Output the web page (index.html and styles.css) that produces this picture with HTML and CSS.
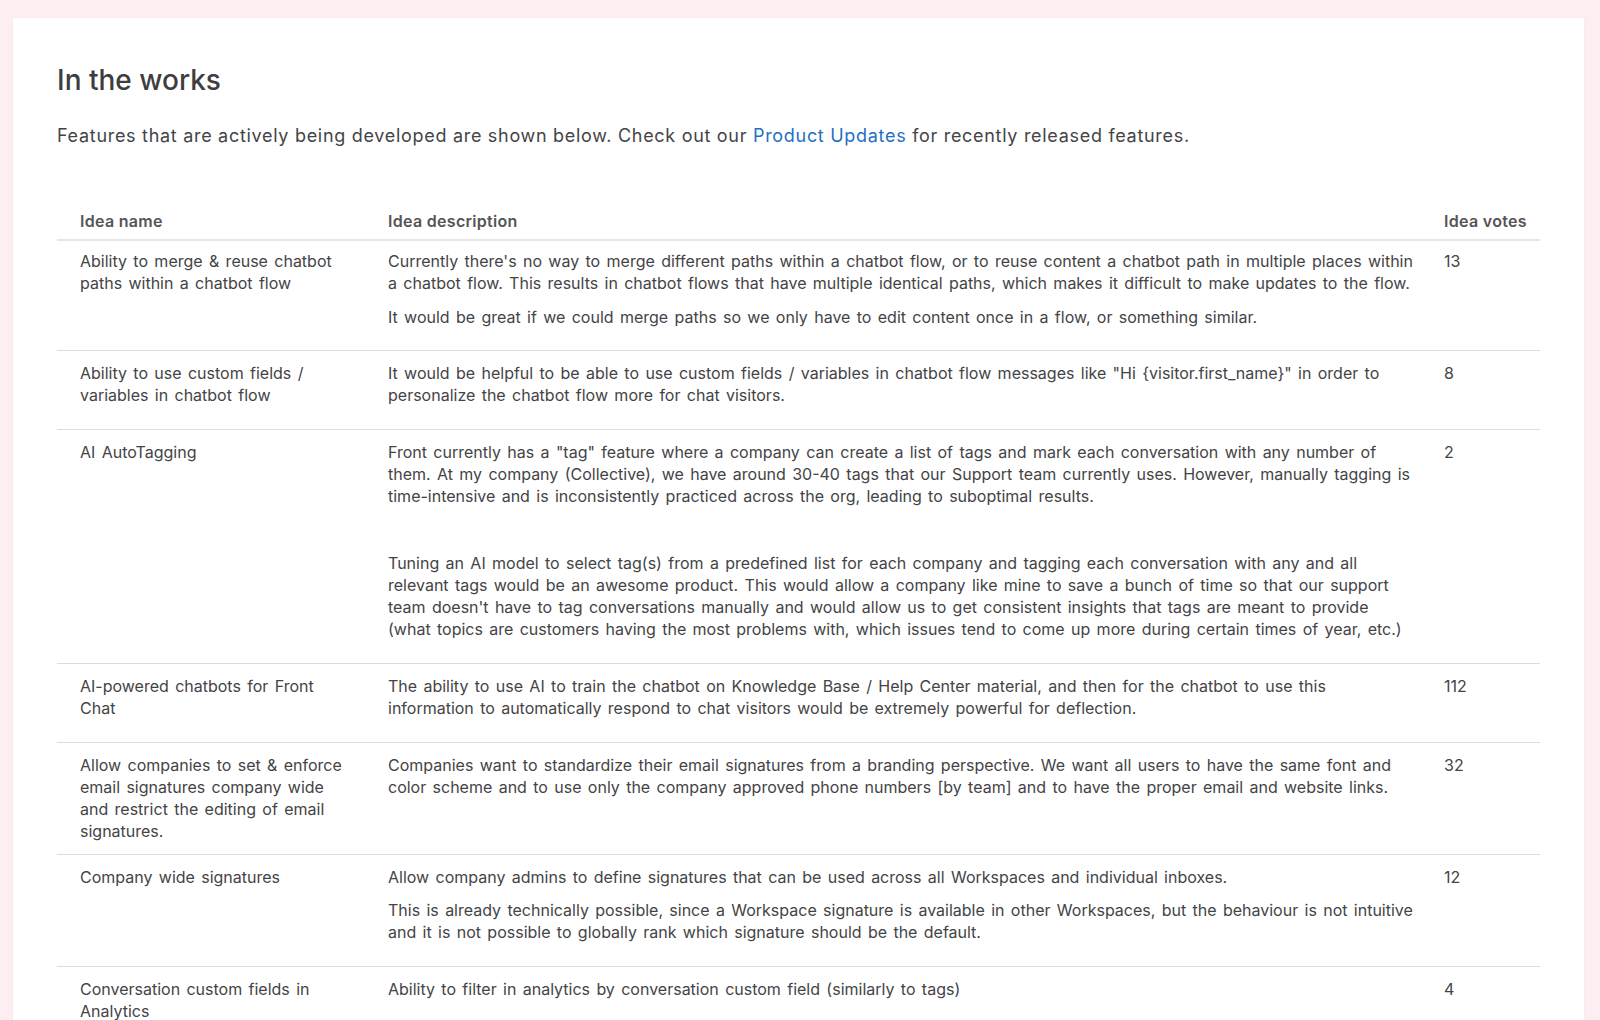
FILE: index.html
```html
<!DOCTYPE html>
<html lang="en">
<head>
<meta charset="utf-8">
<title>In the works</title>
<link rel="stylesheet" href="styles.css">
</head>
<body>
<main class="card">
  <h1 class="title">In the works</h1>
  <p class="intro">Features that are actively being developed are shown below. Check out our <a class="link" href="#">Product Updates</a> for recently released features.</p>
  <table class="ideas">
    <colgroup>
      <col class="col-name">
      <col class="col-desc">
      <col class="col-votes">
    </colgroup>
    <thead>
      <tr>
        <th>Idea name</th>
        <th>Idea description</th>
        <th>Idea votes</th>
      </tr>
    </thead>
    <tbody>
      <tr>
        <td class="name">Ability to merge &amp; reuse chatbot paths within a chatbot flow</td>
        <td class="desc">
          <p>Currently there's no way to merge different paths within a chatbot flow, or to reuse content a chatbot path in multiple places within a chatbot flow. This results in chatbot flows that have multiple identical paths, which makes it difficult to make updates to the flow.</p>
          <p>It would be great if we could merge paths so we only have to edit content once in a flow, or something similar.</p>
        </td>
        <td>13</td>
      </tr>
      <tr>
        <td class="name">Ability to use custom fields / variables in chatbot flow</td>
        <td class="desc">
          <p>It would be helpful to be able to use custom fields / variables in chatbot flow messages like "Hi {visitor.first_name}" in order to personalize the chatbot flow more for chat visitors.</p>
        </td>
        <td>8</td>
      </tr>
      <tr>
        <td class="name">AI AutoTagging</td>
        <td class="desc">
          <p>Front currently has a "tag" feature where a company can create a list of tags and mark each conversation with any number of them. At my company (Collective), we have around 30-40 tags that our Support team currently uses. However, manually tagging is time-intensive and is inconsistently practiced across the org, leading to suboptimal results.</p>
          <p><br></p>
          <p>Tuning an AI model to select tag(s) from a predefined list for each company and tagging each conversation with any and all relevant tags would be an awesome product. This would allow a company like mine to save a bunch of time so that our support team doesn't have to tag conversations manually and would allow us to get consistent insights that tags are meant to provide (what topics are customers having the most problems with, which issues tend to come up more during certain times of year, etc.)</p>
        </td>
        <td>2</td>
      </tr>
      <tr>
        <td class="name">AI-powered chatbots for Front Chat</td>
        <td class="desc">
          <p>The ability to use AI to train the chatbot on Knowledge Base / Help Center material, and then for the chatbot to use this information to automatically respond to chat visitors would be extremely powerful for deflection.</p>
        </td>
        <td>112</td>
      </tr>
      <tr>
        <td class="name">Allow companies to set &amp; enforce email signatures company wide and restrict the editing of email signatures.</td>
        <td class="desc">
          <p>Companies want to standardize their email signatures from a branding perspective. We want all users to have the same font and color scheme and to use only the company approved phone numbers [by team] and to have the proper email and website links.</p>
        </td>
        <td>32</td>
      </tr>
      <tr>
        <td class="name">Company wide signatures</td>
        <td class="desc">
          <p>Allow company admins to define signatures that can be used across all Workspaces and individual inboxes.</p>
          <p>This is already technically possible, since a Workspace signature is available in other Workspaces, but the behaviour is not intuitive and it is not possible to globally rank which signature should be the default.</p>
        </td>
        <td>12</td>
      </tr>
      <tr>
        <td class="name">Conversation custom fields in Analytics</td>
        <td class="desc">
          <p>Ability to filter in analytics by conversation custom field (similarly to tags)</p>
        </td>
        <td>4</td>
      </tr>
    </tbody>
  </table>
</main>
</body>
</html>
```
FILE: styles.css
```css
html, body {
  margin: 0;
  padding: 0;
}

body {
  background: #fdeef2;
  font-family: Inter, "Noto Sans", "Liberation Sans", sans-serif;
  color: #444446;
  min-height: 1020px;
}

.card {
  background: #ffffff;
  margin: 18px 16px 0 13px;
  padding: 45px 44px 40px 44px;
  min-height: 1100px;
  box-shadow: 0 0 3px rgba(0, 0, 0, 0.04);
}

.title {
  margin: 0;
  font-size: 28px;
  line-height: 34px;
  font-weight: 500;
  color: #3e3e40;
}

.intro {
  margin: 25px 0 0 0;
  font-size: 18px;
  line-height: 27px;
  letter-spacing: 0.7px;
  color: #444446;
}

.link {
  color: #1f6fc5;
  text-decoration: none;
}

.ideas {
  width: 100%;
  margin-top: 61px;
  border-collapse: collapse;
  table-layout: fixed;
  font-size: 16px;
  line-height: 22.1px;
  letter-spacing: 0;
  word-spacing: 1.85px;
}

.col-name { width: 308px; }
.col-votes { width: 119px; }

.ideas th {
  text-align: left;
  font-weight: 600;
  color: #555558;
  padding: 0 0 7px 23px;
  border-bottom: 2px solid #e6e6e6;
  vertical-align: top;
  letter-spacing: 0.3px;
  word-spacing: 0;
}

.ideas td {
  text-align: left;
  vertical-align: top;
  padding: 11.2px 0 11.2px 23px;
  border-top: 1px solid #dcdcdc;
  color: #444446;
}

.ideas td.name {
  padding-right: 17px;
}

.ideas td.desc {
  padding-right: 6px;
}

.ideas tbody tr:first-child td {
  border-top: none;
  padding-top: 9px;
}

.ideas td.desc p {
  margin: 0 0 11.3px 0;
}
```
